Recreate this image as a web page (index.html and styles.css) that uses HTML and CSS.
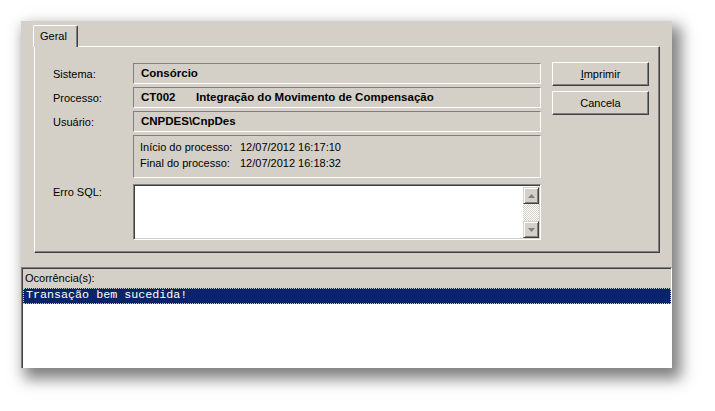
FILE: index.html
```html
<!DOCTYPE html>
<html>
<head>
<meta charset="utf-8">
<link rel="stylesheet" href="styles.css">
</head>
<body>
<div class="win">
  <div class="tabs"><div class="tab">Geral</div></div>
  <div class="panel">
    <div class="form">
      <div class="row"><span class="lbl">Sistema:</span><div class="fld b">Consórcio</div></div>
      <div class="row"><span class="lbl">Processo:</span><div class="fld b"><span class="code">CT002</span>Integração do Movimento de Compensação</div></div>
      <div class="row"><span class="lbl">Usuário:</span><div class="fld b">CNPDES\CnpDes</div></div>
      <div class="row"><span class="lbl"></span>
        <div class="info">
          <div class="irow"><span class="ilbl">Início do processo:</span><span>12/07/2012 16:17:10</span></div>
          <div class="irow"><span class="ilbl">Final do processo:</span><span>12/07/2012 16:18:32</span></div>
        </div>
      </div>
      <div class="row memo-row"><span class="lbl top">Erro SQL:</span>
        <div class="memo">
          <div class="memo-text"></div>
          <div class="sbar">
            <div class="sbtn"><svg width="7" height="4" viewBox="0 0 7 4"><path d="M3.5 0 L7 4 L0 4 Z" fill="#808080"/></svg></div>
            <div class="strack"></div>
            <div class="sbtn"><svg width="7" height="4" viewBox="0 0 7 4"><path d="M0 0 L7 0 L3.5 4 Z" fill="#808080"/></svg></div>
          </div>
        </div>
      </div>
    </div>
    <div class="btns">
      <div class="btn"><span class="u">I</span>mprimir</div>
      <div class="btn">Cancela</div>
    </div>
  </div>
  <div class="list">
    <div class="lhead">Ocorrência(s):</div>
    <div class="lsel">Transação bem sucedida!</div>
  </div>
</div>
</body>
</html>
```
FILE: styles.css
```css
html, body { margin: 0; padding: 0; background: #fff; }
body { font-family: "Liberation Sans", Arial, sans-serif; font-size: 11px; color: #000; min-height: 411px; }
.win {
  margin: 21px 0 0 21px;
  width: 651px;
  height: 347px;
  background: #d4d0c8;
  box-shadow: 6px 8px 14px 3px rgba(0,0,0,0.5);
  display: flex;
  flex-direction: column;
}
.tabs { padding: 4px 0 0 12px; display: flex; }
.tab {
  position: relative;
  z-index: 1;
  width: 45px;
  height: 22px;
  box-sizing: border-box;
  margin-bottom: -1px;
  background: #d4d0c8;
  border-top: 1px solid #fff;
  border-left: 1px solid #fff;
  border-right: 1px solid #404040;
  box-shadow: inset -1px 0 #808080;
  border-radius: 2px 2px 0 0;
  padding: 4px 0 0 6px;
}
.panel {
  margin-left: 13px;
  width: 626px;
  height: 207px;
  box-sizing: border-box;
  border-top: 1px solid #fff;
  border-left: 1px solid #fff;
  border-right: 1px solid #404040;
  border-bottom: 1px solid #404040;
  box-shadow: inset -1px -1px #808080;
  padding: 16px 0 0 18px;
  display: flex;
  gap: 11px;
}
.form { display: flex; flex-direction: column; gap: 3px; width: 488px; }
.row { display: flex; align-items: center; }
.memo-row { align-items: flex-start; margin-top: 3px; }
.lbl { width: 80px; flex: none; }
.lbl.top { padding-top: 2px; }
.fld {
  width: 408px;
  height: 21px;
  box-sizing: border-box;
  border-top: 1px solid #808080;
  border-left: 1px solid #808080;
  border-right: 1px solid #fff;
  border-bottom: 1px solid #fff;
  padding: 3px 0 0 7px;
}
.b { font-weight: bold; font-size: 11.5px; }
.code { display: inline-block; width: 55px; }
.info {
  width: 408px;
  height: 43px;
  box-sizing: border-box;
  border-top: 1px solid #808080;
  border-left: 1px solid #808080;
  border-right: 1px solid #fff;
  border-bottom: 1px solid #fff;
  padding: 5px 0 0 6px;
  display: flex;
  flex-direction: column;
  gap: 4px;
}
.ilbl { display: inline-block; width: 100px; }
.memo {
  width: 408px;
  height: 56px;
  box-sizing: border-box;
  border-top: 1px solid #808080;
  border-left: 1px solid #808080;
  border-right: 1px solid #fff;
  border-bottom: 1px solid #fff;
  box-shadow: inset 1px 1px #404040, inset -1px -1px #d4d0c8;
  background: #fff;
  display: flex;
  padding: 2px 1px 1px 2px;
}
.memo-text { flex: 1; }
.sbar { width: 16px; display: flex; flex-direction: column; }
.sbtn {
  height: 17px;
  box-sizing: border-box;
  background: #d4d0c8;
  border-top: 1px solid #d4d0c8;
  border-left: 1px solid #d4d0c8;
  border-right: 1px solid #404040;
  border-bottom: 1px solid #404040;
  box-shadow: inset 1px 1px #fff, inset -1px -1px #808080;
  display: flex;
  align-items: center;
  justify-content: center;
}
.strack {
  flex: 1;
  background-color: #fff;
  background-image: repeating-conic-gradient(#d4d0c8 0 25%, #fff 0 50%);
  background-size: 2px 2px;
}
.btns { display: flex; flex-direction: column; gap: 5px; margin-top: -1px; }
.btn {
  width: 97px;
  height: 24px;
  box-sizing: border-box;
  border-top: 1px solid #fff;
  border-left: 1px solid #fff;
  border-right: 1px solid #404040;
  border-bottom: 1px solid #404040;
  box-shadow: inset -1px -1px #808080;
  display: flex;
  align-items: center;
  justify-content: center;
}
.u { text-decoration: underline; }
.list {
  margin-top: 14px;
  flex: 1;
  box-sizing: border-box;
  border-top: 1px solid #808080;
  border-left: 1px solid #808080;
  border-right: 1px solid #fff;
  box-shadow: inset 1px 1px #404040;
  background: #fff;
  display: flex;
  flex-direction: column;
}
.lhead {
  background: #d4d0c8;
  height: 19px;
  box-sizing: border-box;
  padding: 3px 0 0 2px;
  margin-left: 1px;
  margin-top: 1px;
}
.lsel {
  height: 16px;
  box-sizing: border-box;
  background: #0a246a;
  color: #fff;
  border: 1px dotted #c8c8c8;
  margin-left: 1px;
  padding: 0 0 0 2px;
  font-family: "Liberation Mono", "Courier New", monospace;
  font-size: 11.7px;
  line-height: 13px;
}
```
